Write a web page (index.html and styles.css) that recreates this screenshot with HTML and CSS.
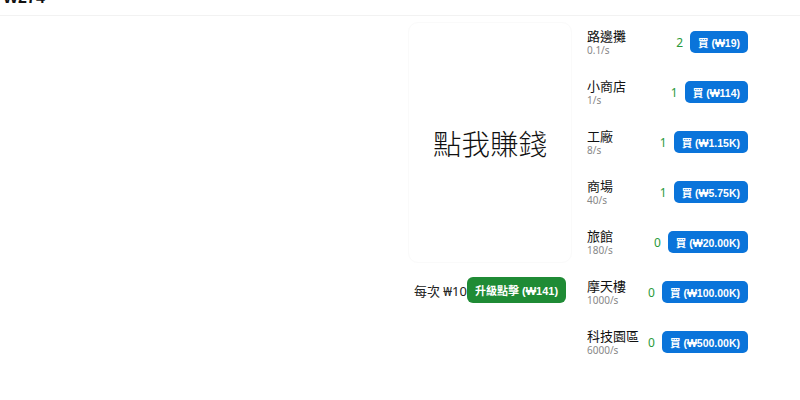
FILE: index.html
```
<!DOCTYPE html>
<html lang="zh-Hant">
<head>
<meta charset="utf-8">
<title>點我賺錢</title>
<link rel="stylesheet" href="styles.css">
</head>
<body>
<header class="topbar"><span class="money">₩274</span></header>
<main class="game">
  <section class="clicker">
    <div class="click-card">點我賺錢</div>
    <div class="upgrade-row">
      <span class="per-click">每次 ₩10</span>
      <button class="btn-upgrade">升級點擊 (₩141)</button>
    </div>
  </section>
  <section class="shop">
    <div class="item"><div class="info"><div class="name">路邊攤</div><div class="rate">0.1/s</div></div><div class="actions"><span class="count">2</span><button class="btn-buy">買 (₩19)</button></div></div>
    <div class="item"><div class="info"><div class="name">小商店</div><div class="rate">1/s</div></div><div class="actions"><span class="count">1</span><button class="btn-buy">買 (₩114)</button></div></div>
    <div class="item"><div class="info"><div class="name">工廠</div><div class="rate">8/s</div></div><div class="actions"><span class="count">1</span><button class="btn-buy">買 (₩1.15K)</button></div></div>
    <div class="item"><div class="info"><div class="name">商場</div><div class="rate">40/s</div></div><div class="actions"><span class="count">1</span><button class="btn-buy">買 (₩5.75K)</button></div></div>
    <div class="item"><div class="info"><div class="name">旅館</div><div class="rate">180/s</div></div><div class="actions"><span class="count">0</span><button class="btn-buy">買 (₩20.00K)</button></div></div>
    <div class="item"><div class="info"><div class="name">摩天樓</div><div class="rate">1000/s</div></div><div class="actions"><span class="count">0</span><button class="btn-buy">買 (₩100.00K)</button></div></div>
    <div class="item"><div class="info"><div class="name">科技園區</div><div class="rate">6000/s</div></div><div class="actions"><span class="count">0</span><button class="btn-buy">買 (₩500.00K)</button></div></div>
  </section>
</main>
</body>
</html>
```
FILE: styles.css
```
html, body {
  margin: 0;
  padding: 0;
  background: #ffffff;
}
body {
  font-family: "Noto Sans", "Noto Sans CJK TC", sans-serif;
  color: #111111;
}
.topbar {
  height: 15px;
  border-bottom: 1px solid #f2f2f2;
  padding: 0 3px;
  overflow: hidden;
}
.money {
  display: block;
  font-family: "Liberation Sans", "Noto Sans CJK TC", sans-serif;
  font-weight: bold;
  font-size: 16px;
  line-height: 16px;
  margin-top: -10px;
}
.game {
  display: flex;
  justify-content: flex-end;
  padding-right: 52px;
  gap: 15px;
}
.clicker {
  width: 164px;
  margin-top: 6px;
  display: flex;
  flex-direction: column;
  align-items: center;
}
.click-card {
  box-sizing: border-box;
  width: 164px;
  height: 241px;
  border: 1px solid #fafafa;
  border-radius: 10px;
  display: flex;
  align-items: center;
  justify-content: center;
  font-family: "Noto Sans CJK TC", sans-serif;
  font-weight: 300;
  font-size: 28.5px;
  color: #111;
}
.upgrade-row {
  margin-top: 14px;
  display: flex;
  align-items: center;
}
.per-click {
  font-size: 13px;
  color: #222;
}
.btn-upgrade {
  height: 26px;
  border: none;
  border-radius: 6px;
  padding: 0 8px;
  background: #1f8b35;
  color: #fff;
  font-family: "Liberation Sans", "Noto Sans CJK TC", sans-serif;
  font-weight: bold;
  font-size: 11px;
}
.shop {
  width: 161px;
  margin-top: 1px;
  display: flex;
  flex-direction: column;
}
.item {
  height: 50px;
  display: flex;
  align-items: center;
}
.info {
  display: flex;
  flex-direction: column;
}
.name {
  font-size: 13px;
  line-height: 16px;
  color: #111;
}
.rate {
  font-size: 10px;
  line-height: 12px;
  color: #888;
}
.actions {
  margin-left: auto;
  display: flex;
  align-items: center;
  gap: 7px;
}
.count {
  font-size: 12px;
  color: #2a9a3a;
}
.btn-buy {
  height: 22px;
  border: none;
  border-radius: 5px;
  padding: 0 8px;
  background: #0a74da;
  color: #fff;
  font-family: "Liberation Sans", "Noto Sans CJK TC", sans-serif;
  font-weight: bold;
  font-size: 10.5px;
}
```
